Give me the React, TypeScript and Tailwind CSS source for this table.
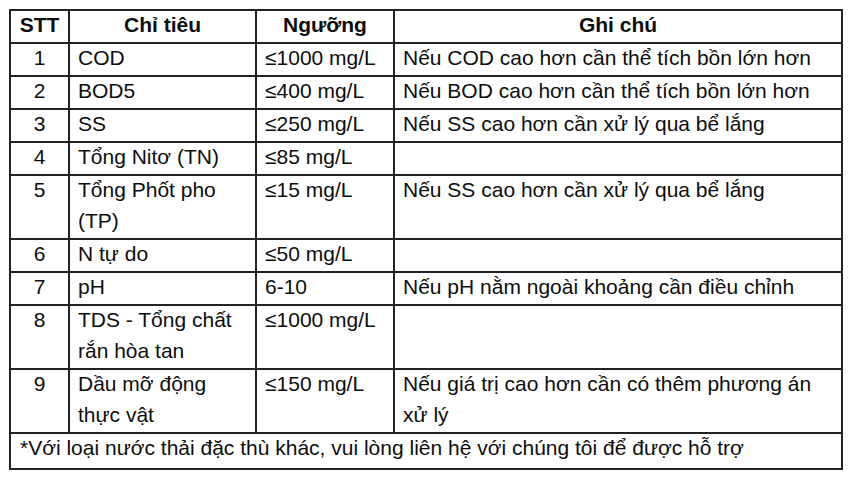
import React from 'react';

type Row = {
  stt: string;
  name: string[];
  limit: string;
  note: string[];
};

const rows: Row[] = [
  { stt: '1', name: ['COD'], limit: '≤1000 mg/L', note: ['Nếu COD cao hơn cần thể tích bồn lớn hơn'] },
  { stt: '2', name: ['BOD5'], limit: '≤400 mg/L', note: ['Nếu BOD cao hơn cần thể tích bồn lớn hơn'] },
  { stt: '3', name: ['SS'], limit: '≤250 mg/L', note: ['Nếu SS cao hơn cần xử lý qua bể lắng'] },
  { stt: '4', name: ['Tổng Nitơ (TN)'], limit: '≤85 mg/L', note: [] },
  { stt: '5', name: ['Tổng Phốt pho', '(TP)'], limit: '≤15 mg/L', note: ['Nếu SS cao hơn cần xử lý qua bể lắng'] },
  { stt: '6', name: ['N tự do'], limit: '≤50 mg/L', note: [] },
  { stt: '7', name: ['pH'], limit: '6-10', note: ['Nếu pH nằm ngoài khoảng cần điều chỉnh'] },
  { stt: '8', name: ['TDS - Tổng chất', 'rắn hòa tan'], limit: '≤1000 mg/L', note: [] },
  { stt: '9', name: ['Dầu mỡ động', 'thực vật'], limit: '≤150 mg/L', note: ['Nếu giá trị cao hơn cần có thêm phương án', 'xử lý'] },
];

const cell = 'border-2 border-[#222] align-top p-0';

const Lines = ({ lines }: { lines: string[] }) => (
  <div className="-mt-[2px] pb-[2px]">
    {lines.map((l, i) => (
      <div key={i} className="whitespace-nowrap">{l || '\u00a0'}</div>
    ))}
  </div>
);

const App = () => {
  return (
    <div className="min-h-screen bg-white pt-[9px] pl-[9px]">
      <table
        className="table-fixed border-collapse text-[21px] leading-[31px] text-[#0d0d0d]"
        style={{ fontFamily: '"Liberation Sans", Arial, sans-serif' }}
      >
        <colgroup>
          <col className="w-[59px]" />
          <col className="w-[187px]" />
          <col className="w-[138px]" />
          <col className="w-[448px]" />
        </colgroup>
        <thead>
          <tr className="font-bold">
            <th className={`${cell} text-center`}><Lines lines={['STT']} /></th>
            <th className={`${cell} text-center`}><Lines lines={['Chỉ tiêu']} /></th>
            <th className={`${cell} text-center`}><Lines lines={['Ngưỡng']} /></th>
            <th className={`${cell} text-center`}><Lines lines={['Ghi chú']} /></th>
          </tr>
        </thead>
        <tbody>
          {rows.map((r) => (
            <tr key={r.stt}>
              <td className={`${cell} text-center`}><Lines lines={[r.stt]} /></td>
              <td className={`${cell} pl-[8px]`}><Lines lines={r.name} /></td>
              <td className={`${cell} pl-[8px]`}><Lines lines={[r.limit]} /></td>
              <td className={`${cell} pl-[8px]`}><Lines lines={r.note.length ? r.note : ['']} /></td>
            </tr>
          ))}
          <tr>
            <td colSpan={4} className={`${cell} pl-[9px] pb-[3px]`}>
              <Lines lines={['*Với loại nước thải đặc thù khác, vui lòng liên hệ với chúng tôi để được hỗ trợ']} />
            </td>
          </tr>
        </tbody>
      </table>
    </div>
  );
};

export default App;
